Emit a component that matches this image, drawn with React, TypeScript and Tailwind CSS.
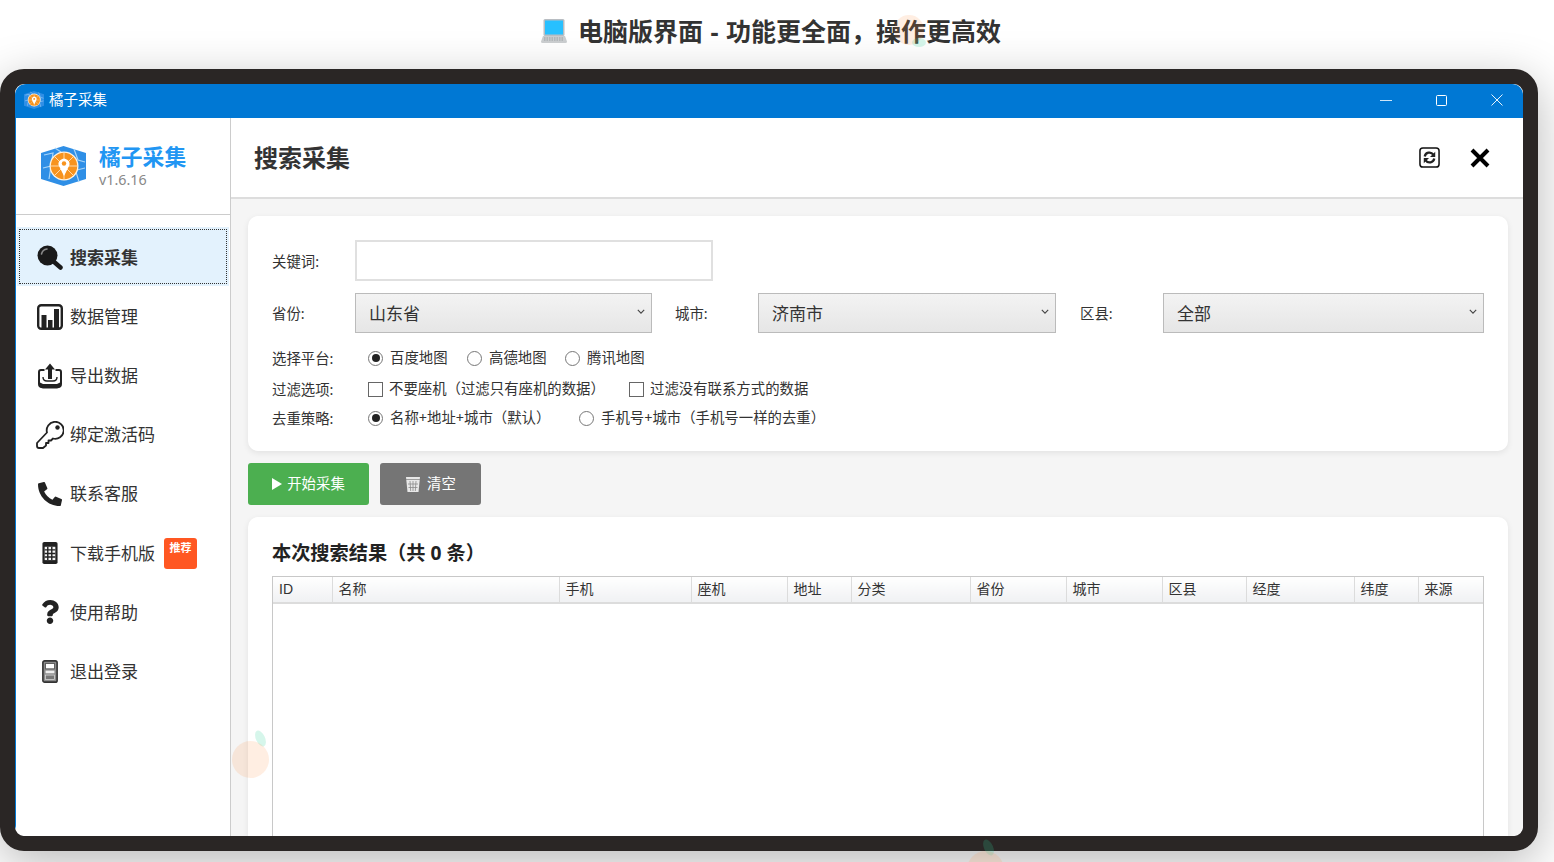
import React from "react";
import { FaPhoneAlt, FaQuestion } from "react-icons/fa";

const font = "font-['Noto_Sans','Noto_Sans_CJK_SC',sans-serif]";

function Logo({ className }: { className: string }) {
  return (
    <svg viewBox="0 0 45 40" className={className}>
      <path d="M22.5 0 L45 7 V33 L22.5 40 L0 33 V7 Z" fill="#2f8fe6" />
      <path d="M3 9 L12 7 L10 20 L2 22 M10 20 L8 33 M33 3 L37 14 L44 16 M36 24 L44 22 M35 26 L38 36 M14 2 L20 6" stroke="#a8d4f7" strokeWidth="1.2" fill="none" />
      <circle cx="23" cy="20" r="14.5" fill="#fff3e0" />
      <circle cx="23" cy="20" r="13.2" fill="#f7931e" />
      <path d="M23 7 V33 M10 20 H36 M14 11 L32 29 M32 11 L14 29" stroke="#ffd9a8" strokeWidth="1" />
      <path d="M23 30 L18.5 21 A5.4 5.4 0 1 1 27.5 21 Z" fill="#fff" />
      <circle cx="23" cy="17.5" r="2.2" fill="#f7931e" />
    </svg>
  );
}

function Laptop() {
  return (
    <svg viewBox="0 0 26 26" className="w-[26px] h-[26px] shrink-0">
      <rect x="2.5" y="1" width="21" height="17" rx="1.5" fill="#b8bdc2" />
      <rect x="4" y="2.5" width="18" height="14" fill="#27c0ff" />
      <path d="M2 18 H24 L26 23.5 Q26 25 24.5 25 H1.5 Q0 25 0 23.5 Z" fill="#c9ccce" />
      <path d="M3 20 H23 M3 22 H23" stroke="#9ba0a4" strokeWidth="1" strokeDasharray="1.5 1" />
    </svg>
  );
}

const SearchIcon = () => (
  <svg viewBox="0 0 26 26" className="w-[26px] h-[26px]">
    <path d="M16 16 L23.5 22.5" stroke="#1a1a1a" strokeWidth="4.5" strokeLinecap="round" />
    <circle cx="10.5" cy="10.5" r="10" fill="#1a1a1a" />
    <path d="M4.5 9 A6.5 6.5 0 0 1 10 4" stroke="#8a8a8a" strokeWidth="1.6" fill="none" strokeLinecap="round" />
  </svg>
);
const ChartIcon = () => (
  <svg viewBox="0 0 26 26" className="w-[26px] h-[26px]">
    <rect x="1.2" y="1.2" width="23.6" height="23.6" rx="3" fill="none" stroke="#222" strokeWidth="2.4" />
    <path d="M4.5 11 H9.5 V25 H4.5 Z M11 16 H15.5 V25 H11 Z M17 5 H22 V25 H17 Z" fill="#222" />
  </svg>
);
const ExportIcon = () => (
  <svg viewBox="0 0 26 26" className="w-[26px] h-[26px]">
    <path d="M7.5 7 H4 Q2 7 2 9 V21 Q2 24 5 24 H21 Q24 24 24 21 V9 Q24 7 22 7 H18.5" fill="none" stroke="#222" strokeWidth="2" />
    <path d="M2 19 Q2 25.5 6 25.5 H20 Q24 25.5 24 19 L20 21 H6 Z" fill="#222" />
    <path d="M13 0.5 L18 6.5 H15 V16 H11 V6.5 H8 Z" fill="#222" />
    <path d="M6 14 Q6 18 10 18 H16 Q20 18 20 14" fill="none" stroke="#222" strokeWidth="1.4" />
  </svg>
);
const KeyIcon = () => (
  <svg viewBox="0 0 28 28" className="w-[28px] h-[28px] shrink-0">
    <path d="M11 11.5 A8.5 8.5 0 1 1 17 17.5 L15 19.5 H12.5 V22 H10 V24.5 L7 27 H3 Q1 27 1 25 V22 Z" fill="none" stroke="#222" strokeWidth="1.8" strokeLinejoin="round" />
    <circle cx="21.5" cy="6.5" r="2.2" fill="#222" />
  </svg>
);
const CalcIcon = () => (
  <svg viewBox="0 0 18 26" className="w-[16px] h-[24px]">
    <rect x="0.5" y="0.5" width="17" height="25" rx="2" fill="#222" />
    <rect x="3" y="6" width="12" height="15" fill="#f4f4f4" />
    <path d="M3 9.5 H15 M3 13.5 H15 M3 17.5 H15 M6.5 6 V21 M11 6 V21" stroke="#222" strokeWidth="1.6" />
  </svg>
);
const DoorIcon = () => (
  <svg viewBox="0 0 18 26" className="w-[16px] h-[25px]">
    <rect x="1" y="1" width="16" height="24" rx="2" fill="#8a8a8a" stroke="#333" strokeWidth="1.8" />
    <rect x="4" y="4" width="10" height="6" fill="#fff" stroke="#555" />
    <rect x="4" y="12" width="10" height="3" fill="#eee" />
    <rect x="4" y="17" width="10" height="5" fill="#777" stroke="#ddd" strokeWidth="0.8" />
  </svg>
);

const navItems: { label: string; icon: React.ReactNode; active?: boolean; badge?: boolean }[] = [
  { label: "搜索采集", icon: <SearchIcon />, active: true },
  { label: "数据管理", icon: <ChartIcon /> },
  { label: "导出数据", icon: <ExportIcon /> },
  { label: "绑定激活码", icon: <KeyIcon /> },
  { label: "联系客服", icon: <FaPhoneAlt className="w-[24px] h-[24px] text-[#222]" /> },
  { label: "下载手机版", icon: <CalcIcon />, badge: true },
  { label: "使用帮助", icon: <FaQuestion className="w-[24px] h-[24px] text-[#222]" /> },
  { label: "退出登录", icon: <DoorIcon /> },
];

const columns = [
  { label: "ID", w: "w-[59px]" },
  { label: "名称", w: "w-[227px]" },
  { label: "手机", w: "w-[132px]" },
  { label: "座机", w: "w-[96px]" },
  { label: "地址", w: "w-[64px]" },
  { label: "分类", w: "w-[119px]" },
  { label: "省份", w: "w-[96px]" },
  { label: "城市", w: "w-[96px]" },
  { label: "区县", w: "w-[84px]" },
  { label: "经度", w: "w-[108px]" },
  { label: "纬度", w: "w-[64px]" },
  { label: "来源", w: "w-[65px]" },
];

function Label({ children }: { children: React.ReactNode }) {
  return <span className="w-[83px] shrink-0 pt-[2px] text-[14.4px] text-[#333]">{children}</span>;
}

function Select({ value, className }: { value: string; className: string }) {
  return (
    <div className={`h-[40px] flex items-center justify-between pl-[13px] pr-[6px] border border-[#bbb] bg-gradient-to-b from-[#f3f3f3] to-[#e6e6e6] text-[17px] text-[#333] ${className}`}>
      <span className="pt-[2px]">{value}</span>
      <svg viewBox="0 0 10 6" className="w-[8px] h-[5px] mb-[4px]">
        <path d="M1 1 L5 5 L9 1" fill="none" stroke="#444" strokeWidth="1.4" />
      </svg>
    </div>
  );
}

function Radio({ checked, label, className = "" }: { checked?: boolean; label: string; className?: string }) {
  return (
    <label className={`flex items-center text-[14.4px] text-[#333] ${className}`}>
      <span className="w-[15px] h-[15px] rounded-full border border-[#777] bg-white flex items-center justify-center shrink-0 mr-[7px]">
        {checked && <span className="w-[8px] h-[8px] rounded-full bg-[#222]" />}
      </span>
      {label}
    </label>
  );
}

function Check({ label, className = "" }: { label: string; className?: string }) {
  return (
    <label className={`flex items-center text-[14.4px] text-[#333] ${className}`}>
      <span className="w-[15px] h-[15px] border border-[#666] bg-white shrink-0 mr-[6px]" />
      {label}
    </label>
  );
}

function Deco({ circle, leaf }: { circle: string; leaf: string }) {
  return (
    <>
      <div className={`absolute rounded-[50%] bg-[#34d399]/20 pointer-events-none ${leaf}`} />
      <div className={`absolute rounded-full bg-[#ff8a3d]/15 pointer-events-none ${circle}`} />
    </>
  );
}

export default function App() {
  return (
    <div className={`relative w-full h-[862px] overflow-hidden bg-white ${font}`}>
      <div className="h-[69px] flex items-center justify-center pr-[12px] gap-[11px] pb-[7px]">
        <Laptop />
        <h1 className="text-[25px] [word-spacing:1px] font-bold text-[#333] leading-none">电脑版界面 - 功能更全面，操作更高效</h1>
      </div>

      <div className="w-[1538px] h-[782px] rounded-[24px] border-[15px] border-[#2a2625] bg-white shadow-[0_12px_48px_rgba(0,0,0,0.28)] overflow-hidden">
        <div className="h-full flex flex-col rounded-[11px] overflow-hidden">
          <div className="h-[34px] shrink-0 bg-[#0078d4] flex items-center pl-[9px] pb-[2px] text-white">
            <Logo className="w-[20px] h-[18px] mr-[5px]" />
            <span className="text-[14.5px]">橘子采集</span>
            <div className="ml-auto flex items-center">
              <div className="w-[52px] flex justify-center"><div className="w-[12px] h-px bg-[#cfe6f8]" /></div>
              <div className="w-[59px] flex justify-center"><div className="w-[11px] h-[11px] border border-white rounded-[1.5px]" /></div>
              <div className="w-[52px] flex justify-center">
                <svg viewBox="0 0 12 12" className="w-[12px] h-[12px]"><path d="M0.5 0.5 L11.5 11.5 M11.5 0.5 L0.5 11.5" stroke="#e6f2fb" strokeWidth="1" /></svg>
              </div>
            </div>
          </div>

          <div className="flex-1 flex min-h-0">
            <aside className="w-[216px] shrink-0 bg-white border-l border-[#0078d4] border-r border-r-[#ccc] flex flex-col">
              <div className="h-[97px] shrink-0 border-b border-[#ccc] flex items-center pl-[25px] gap-[13px]">
                <Logo className="w-[45px] h-[40px]" />
                <div className="flex flex-col">
                  <span className="text-[21.8px] leading-[26px] font-bold text-[#2196f3]">橘子采集</span>
                  <span className="text-[14.3px] leading-[18px] text-[#888] mt-[1px]">v1.6.16</span>
                </div>
              </div>
              <nav className="pt-[12px] px-[1px] flex flex-col">
                {navItems.map((it) => (
                  <div
                    key={it.label}
                    className={`h-[59.15px] flex items-center pl-[20px] pt-[2px] text-[17px] text-[#333] ${it.active ? "bg-[#e3f2fd] font-bold outline-1 outline-dotted outline-[#333] outline-offset-[-3px]" : ""}`}
                  >
                    <span className="w-[26px] h-[26px] flex items-center justify-center shrink-0 mr-[7px]">{it.icon}</span>
                    <span>{it.label}</span>
                    {it.badge && (
                      <span className="ml-[9px] w-[33px] h-[31px] rounded-[3px] bg-[#ff5722] text-white text-[11px] font-bold text-center leading-[20px]">推荐</span>
                    )}
                  </div>
                ))}
              </nav>
            </aside>

            <main className="flex-1 min-w-0 flex flex-col bg-[#f5f5f5]">
              <header className="h-[81px] shrink-0 bg-white border-b-2 border-[#ddd] flex items-center pl-[23px] pr-[33px]">
                <h2 className="text-[24px] font-bold text-[#333]">搜索采集</h2>
                <svg viewBox="0 0 22 22" className="ml-auto w-[21px] h-[21px]">
                  <rect x="1" y="1" width="20" height="20" rx="3" fill="#fff" stroke="#111" strokeWidth="1.6" />
                  <path d="M6 10 A5 5 0 0 1 15 8 M16 12 A5 5 0 0 1 7 14" fill="none" stroke="#222" strokeWidth="2.4" />
                  <path d="M17 5 V10.5 H11.5 Z M5 17 V11.5 H10.5 Z" fill="#222" />
                </svg>
                <svg viewBox="0 0 20 20" className="ml-[30px] w-[20px] h-[20px]">
                  <path d="M2 2 L18 18 M18 2 L2 18" stroke="#000" strokeWidth="4" />
                </svg>
              </header>

              <div className="flex-1 min-h-0 flex flex-col pt-[17px] pl-[17px] pr-[15px] gap-[12px]">
                <section className="h-[235px] shrink-0 rounded-[10px] bg-white shadow-[0_2px_6px_rgba(0,0,0,0.08)] pt-[24px] px-[24px]">
                  <div className="flex items-center h-[41px]">
                    <Label>关键词:</Label>
                    <input className="w-[358px] h-full border-2 border-[#e0e0e0] bg-white outline-none" />
                  </div>
                  <div className="flex items-center h-[40px] mt-[12px]">
                    <Label>省份:</Label>
                    <Select value="山东省" className="w-[297px]" />
                    <span className="w-[106px] pl-[23px] pt-[2px] shrink-0 text-[14.4px] text-[#333]">城市:</span>
                    <Select value="济南市" className="w-[298px]" />
                    <span className="w-[107px] pl-[24px] pt-[2px] shrink-0 text-[14.4px] text-[#333]">区县:</span>
                    <Select value="全部" className="w-[321px]" />
                  </div>
                  <div className="flex items-center h-[20px] mt-[15px]">
                    <Label>选择平台:</Label>
                    <div className="ml-[13px] flex items-center">
                      <Radio checked label="百度地图" className="w-[99px]" />
                      <Radio label="高德地图" className="w-[98px]" />
                      <Radio label="腾讯地图" />
                    </div>
                  </div>
                  <div className="flex items-center h-[20px] mt-[11px]">
                    <Label>过滤选项:</Label>
                    <div className="ml-[13px] flex items-center">
                      <Check label="不要座机（过滤只有座机的数据）" className="w-[261px]" />
                      <Check label="过滤没有联系方式的数据" />
                    </div>
                  </div>
                  <div className="flex items-center h-[20px] mt-[9px]">
                    <Label>去重策略:</Label>
                    <div className="ml-[13px] flex items-center">
                      <Radio checked label="名称+地址+城市（默认）" className="w-[211px]" />
                      <Radio label="手机号+城市（手机号一样的去重）" />
                    </div>
                  </div>
                </section>

                <div className="flex gap-[11px] shrink-0">
                  <button className="w-[121px] h-[42px] rounded-[3px] bg-[#4caf50] text-white text-[14.4px] flex items-center justify-center gap-[5px]">
                    <svg viewBox="0 0 10 12" className="w-[10px] h-[12px]"><path d="M0 0 L10 6 L0 12 Z" fill="#fff" /></svg>
                    开始采集
                  </button>
                  <button className="w-[101px] h-[42px] rounded-[3px] bg-[#757575] text-white text-[14.4px] flex items-center justify-center gap-[6px]">
                    <svg viewBox="0 0 16 17" className="w-[16px] h-[17px]">
                      <path d="M1 1 H15 L13.5 16 H2.5 Z" fill="#e8e8e8" />
                      <path d="M1 3.5 H15 M5 5 L5.7 15 M8 5 V15 M11 5 L10.3 15 M3 8 H13 M3.5 11.5 H12.5" stroke="#8a8a8a" strokeWidth="0.8" />
                    </svg>
                    清空
                  </button>
                </div>

                <section className="flex-1 min-h-0 rounded-t-[10px] bg-white shadow-[0_2px_6px_rgba(0,0,0,0.08)] pt-[22px] px-[24px] flex flex-col">
                  <h3 className="h-[28px] shrink-0 text-[19.2px] leading-[28px] font-bold text-[#222]">本次搜索结果（共 0 条）</h3>
                  <div className="mt-[9px] flex-1 min-h-0 border border-b-0 border-[#c8c8c8] overflow-hidden">
                    <table className="table-fixed border-collapse w-full">
                      <thead>
                        <tr>
                          {columns.map((c) => (
                            <th key={c.label} className={`${c.w} h-[26px] p-0 pl-[6px] text-left text-[14px] font-normal font-['Liberation_Sans','Noto_Sans_CJK_SC',sans-serif] text-[#333] bg-gradient-to-b from-white to-[#f0f1f3] border-r border-b-2 border-[#dcdcdc] last:border-r-0`}>
                              {c.label}
                            </th>
                          ))}
                        </tr>
                      </thead>
                    </table>
                  </div>
                </section>
              </div>
            </main>
          </div>
        </div>
      </div>

      <Deco circle="left-[894px] top-[15px] w-[30px] h-[30px]" leaf="left-[912px] top-[38px] w-[14px] h-[9px]" />
      <Deco circle="left-[232px] top-[741px] w-[37px] h-[37px]" leaf="left-[256px] top-[730px] w-[9px] h-[17px] -rotate-[25deg]" />
      <Deco circle="left-[967px] top-[851px] w-[37px] h-[37px]" leaf="left-[984px] top-[839px] w-[9px] h-[17px] -rotate-[25deg]" />
    </div>
  );
}
